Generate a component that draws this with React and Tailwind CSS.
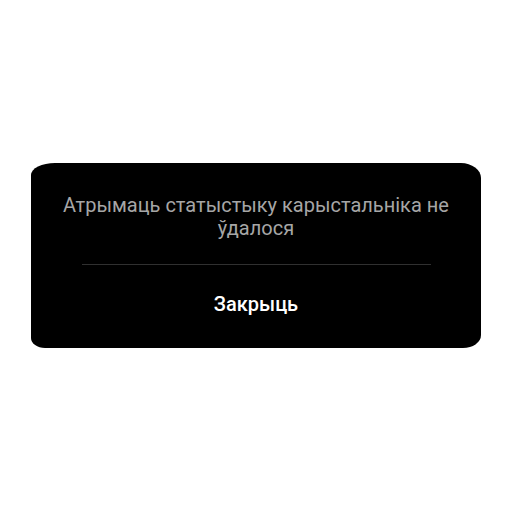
export default function App() {
  return (
    <div className="w-[512px] h-[512px] bg-white pt-[163px] pl-[31px] font-['Roboto',sans-serif]">
      <div className="w-[450px] h-[185px] bg-black flex flex-col items-center rounded-[24px_20px_18px_14px/12px_15px_13px_10px]">
        <p className="mt-[31px] w-[410px] text-center text-[20px] leading-[23px] text-[#a6a6a6]">
          Атрымаць статыстыку карыстальніка не ўдалося
        </p>
        <div className="mt-[24px] w-[349px] h-px bg-[#303030]" />
        <button className="mt-[28px] text-[20px] leading-[23px] font-medium text-white">Закрыць</button>
      </div>
    </div>
  );
}
